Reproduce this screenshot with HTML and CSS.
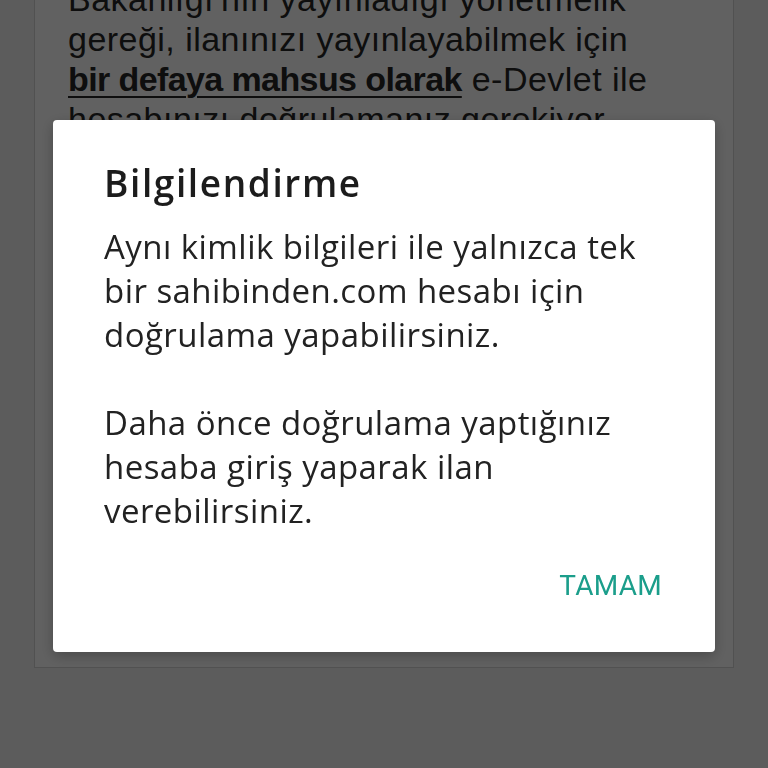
FILE: index.html
```html
<!DOCTYPE html>
<html lang="tr">
<head>
<meta charset="utf-8">
<link rel="stylesheet" href="styles.css">
</head>
<body>
<div class="page">
  <div class="card">
    <p class="info">Bakanlığı'nın yayınladığı yönetmelik<br>gereği, ilanınızı yayınlayabilmek için<br><span class="strong">bir defaya mahsus olarak</span> e-Devlet ile<br>hesabınızı doğrulamanız gerekiyor.</p>
  </div>
</div>
<div class="overlay">
  <div class="dialog">
    <h2 class="dialog-title">Bilgilendirme</h2>
    <p class="dialog-text">Aynı kimlik bilgileri ile yalnızca tek<br>bir sahibinden.com hesabı için<br>doğrulama yapabilirsiniz.</p>
    <p class="dialog-text">Daha önce doğrulama yaptığınız<br>hesaba giriş yaparak ilan<br>verebilirsiniz.</p>
    <div class="dialog-actions"><span class="btn">TAMAM</span></div>
  </div>
</div>
</body>
</html>
```
FILE: styles.css
```css
html, body {
  margin: 0;
  height: 100%;
  overflow: hidden;
}
body {
  background: #f2f2f2;
  font-family: "Open Sans", "Noto Sans", sans-serif;
}
.page {
  padding: 0 34px;
}
.card {
  box-sizing: border-box;
  margin-top: -62px;
  height: 730px;
  background: #ffffff;
  border: 1px solid #d4d4d4;
  padding: 40px 33px;
}
.info {
  margin: 0;
  font-family: "Liberation Sans", Arial, sans-serif;
  font-size: 34px;
  line-height: 40px;
  letter-spacing: 0.47px;
  color: #262626;
  white-space: nowrap;
}
.strong {
  font-weight: 700;
  letter-spacing: -0.6px;
  text-decoration: underline;
  text-decoration-thickness: 2px;
  text-underline-offset: 5px;
}
.overlay {
  position: fixed;
  inset: 0;
  background: rgba(0, 0, 0, 0.62);
  display: flex;
  align-items: center;
  justify-content: center;
}
.dialog {
  width: 662px;
  box-sizing: border-box;
  margin-top: 3px;
  background: #ffffff;
  border-radius: 4px;
  padding: 43px 53px 48px 51px;
  box-shadow: 0 4px 14px rgba(0, 0, 0, 0.25);
}
.dialog-title {
  margin: 0 0 22px;
  font-size: 37px;
  line-height: 40px;
  font-weight: 600;
  color: #1c1c1c;
  letter-spacing: 1.6px;
}
.dialog-text {
  margin: 0 0 44px;
  font-size: 33px;
  line-height: 44px;
  letter-spacing: 0.45px;
  color: #222222;
  white-space: nowrap;
}
.dialog-text:last-of-type {
  margin-bottom: 35px;
}
.dialog-actions {
  display: flex;
  justify-content: flex-end;
}
.btn {
  font-family: Roboto, sans-serif;
  font-size: 28px;
  line-height: 36px;
  color: #1b9e8b;
  letter-spacing: 0.3px;
}
```
